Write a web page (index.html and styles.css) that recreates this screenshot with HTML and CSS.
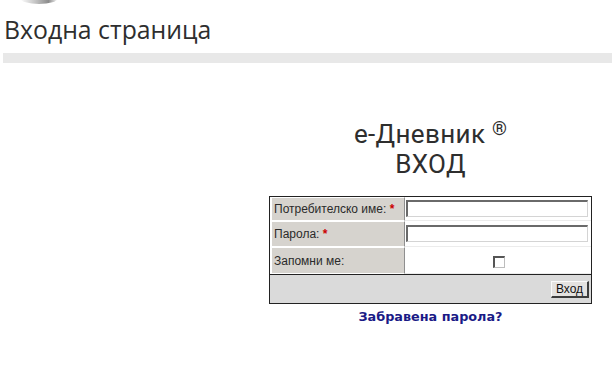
FILE: index.html
```html
<!DOCTYPE html>
<html lang="bg">
<head>
<meta charset="utf-8">
<title>Входна страница</title>
<link rel="stylesheet" href="styles.css">
</head>
<body>
<div class="topbar">
  <svg class="logo-edge" width="70" height="8" viewBox="0 0 70 8" aria-hidden="true">
    <defs>
      <linearGradient id="g" x1="0" y1="0" x2="1" y2="0">
        <stop offset="0" stop-color="#ffffff"/>
        <stop offset="0.45" stop-color="#bdbdbd"/>
        <stop offset="0.75" stop-color="#8c8c8c"/>
        <stop offset="1" stop-color="#ffffff"/>
      </linearGradient>
    </defs>
    <ellipse cx="39" cy="-2" rx="19" ry="6" fill="url(#g)"/>
  </svg>
</div>
<h1 class="page-title">Входна страница</h1>
<div class="title-bar"></div>
<div class="main">
  <div class="spacer"></div>
  <div class="login">
    <div class="brand">
      <div class="brand-line">е-Дневник <sup class="reg">®</sup></div>
      <div class="brand-line">ВХОД</div>
    </div>
    <table class="login-table">
      <tr class="r1">
        <td class="lbl">Потребителско име: <span class="req">*</span></td>
        <td class="fld"><input class="txt" type="text"></td>
      </tr>
      <tr class="r2">
        <td class="lbl">Парола: <span class="req">*</span></td>
        <td class="fld"><input class="txt" type="password"></td>
      </tr>
      <tr class="r3">
        <td class="lbl">Запомни ме:</td>
        <td class="fld center"><input class="chk" type="checkbox"></td>
      </tr>
      <tr class="r4">
        <td class="foot" colspan="2"><button class="btn" type="button">Вход</button></td>
      </tr>
    </table>
    <a class="forgot" href="#">Забравена парола?</a>
  </div>
</div>
</body>
</html>
```

FILE: styles.css
```css
html, body {
  margin: 0;
  padding: 0;
  background: #fff;
}
body {
  width: 612px;
  font-family: "Open Sans", "Liberation Sans", sans-serif;
  color: #333;
}
.topbar {
  height: 12px;
  position: relative;
}
.logo-edge {
  position: absolute;
  left: 0;
  top: 0;
}
.page-title {
  margin: 0 0 0 4px;
  font-family: "Open Sans", sans-serif;
  font-weight: 400;
  font-size: 24.8px;
  line-height: 34px;
  color: #2e2e2e;
}
.title-bar {
  margin: 7px 0 0 3px;
  height: 10px;
  background: #e8e8e8;
}
.main {
  display: flex;
}
.spacer {
  width: 249px;
  flex: none;
}
.login {
  flex: 1;
  display: flex;
  flex-direction: column;
  align-items: center;
  padding-top: 56px;
}
.brand {
  text-align: center;
  font-family: Roboto, "Open Sans", sans-serif;
  font-size: 26px;
  line-height: 30.5px;
  letter-spacing: 0.35px;
  color: #2e2e2e;
  margin-bottom: 17px;
}
.brand-line {
  white-space: nowrap;
  height: 30px;
}
.reg {
  font-size: 19px;
  vertical-align: top;
  line-height: 18px;
  position: relative;
  top: 1px;
  letter-spacing: 0;
}
.login-table {
  width: 323px;
  border: 1px solid #222;
  border-collapse: separate;
  border-spacing: 0;
  font-family: "Liberation Sans", Arial, sans-serif;
  font-size: 12px;
  color: #2a2a2a;
}
.login-table td {
  padding: 0;
}
.lbl {
  width: 130px;
  background: #d6d3ce;
  padding-left: 2px !important;
  border-left: 2px solid #fff;
  border-top: 1px solid #fff;
  border-bottom: 1px solid #fff;
  border-right: 1px solid #8f8f8f;
  white-space: nowrap;
}
.r1 td { height: 22px; }
.r2 td { height: 24px; }
.r3 td { height: 25px; }
.fld {
  padding-left: 1px !important;
  border-bottom: 1px solid #ececec;
}
.center {
  text-align: center;
}
.req {
  color: #cc0000;
  font-weight: bold;
}
.txt {
  display: block;
  box-sizing: border-box;
  width: 182px;
  height: 17px;
  margin: 0;
  padding: 0 2px;
  border-style: solid;
  border-width: 2px 1px 1px 2px;
  border-color: #6a6a6a #d4d4d4 #d4d4d4 #6a6a6a;
  background: #fff;
  font-size: 12px;
}
.chk {
  appearance: none;
  -webkit-appearance: none;
  width: 12px;
  height: 12px;
  margin: 3px 0 0 0;
  box-sizing: border-box;
  border-style: solid;
  border-width: 2px 1px 1px 2px;
  border-color: #555 #bdbdbd #bdbdbd #555;
  background: #fff;
  vertical-align: middle;
}
.foot {
  height: 28px;
  background: #dadada;
  border-top: 1px solid #222;
  text-align: right;
  padding-right: 2px !important;
}
.btn {
  appearance: none;
  -webkit-appearance: none;
  box-sizing: border-box;
  width: 38px;
  height: 17px;
  padding: 0;
  margin: 0;
  font-family: "Liberation Sans", Arial, sans-serif;
  font-size: 12px;
  color: #111;
  background: #e4e2e0;
  border-style: solid;
  border-width: 1px 2px 2px 1px;
  border-color: #fafafa #3c3c3c #3c3c3c #fafafa;
  vertical-align: middle;
}
.forgot {
  margin-top: 5px;
  font-family: "DejaVu Sans", Verdana, sans-serif;
  font-weight: bold;
  font-size: 12.8px;
  line-height: 16px;
  color: #1a1a86;
  text-decoration: none;
}
```
